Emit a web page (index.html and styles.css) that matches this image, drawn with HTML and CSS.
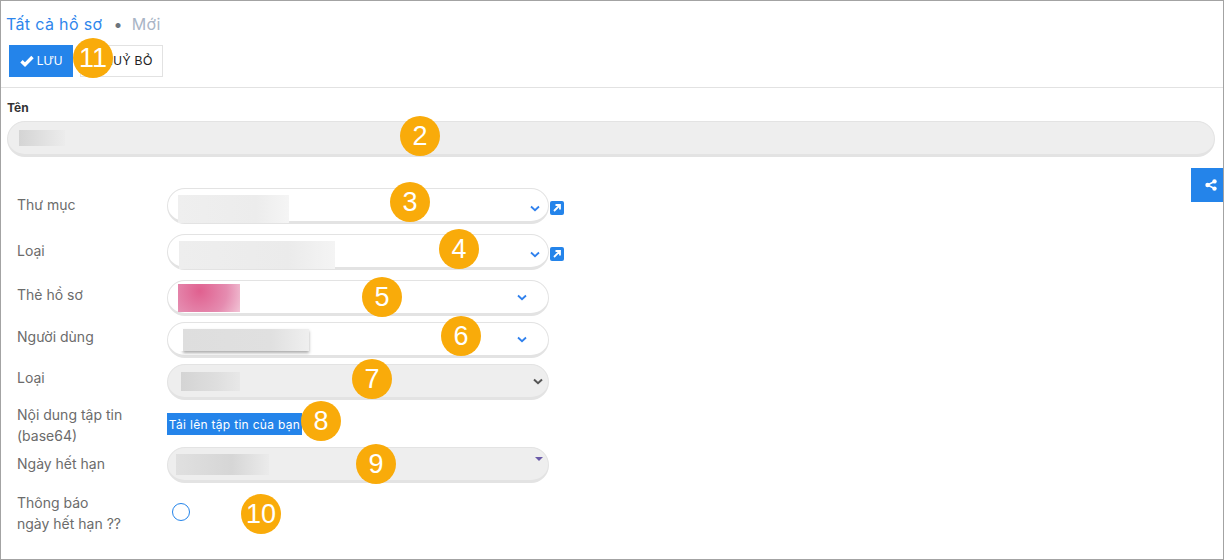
FILE: index.html
```html
<!DOCTYPE html>
<html lang="vi">
  <head>
    <meta charset="UTF-8" />
    <title>Tất cả hồ sơ</title>
    <link rel="stylesheet" href="styles.css">
  </head>
  <body>
    <div class="frame">
      <div class="page-head">
        <div class="crumbs">
          <a class="crumb-link">Tất cả hồ sơ</a>
          <span class="crumb-dot">•</span>
          <span class="crumb-now">Mới</span>
        </div>
        <div class="actions">
          <button class="btn-save">
            <svg class="check" viewBox="0 0 14 12" width="14" height="12"><path d="M1.5 6.2 5 9.6 12.5 2" fill="none" stroke="#fff" stroke-width="3.4"/></svg>
            LƯU
          </button>
          <button class="btn-cancel">HUỶ BỎ</button>
        </div>
      </div>

      <div class="form">
        <label class="name-label">Tên</label>
        <div class="name-input"><span class="blur blur-name"></span></div>

        <div class="row row-folder">
          <div class="row-label">Thư mục</div>
          <div class="field">
            <span class="blur blur-folder"></span>
            <svg class="chev chev-low" viewBox="0 0 10 7" width="10" height="7"><path d="M1 1.5 5 5.2 9 1.5" fill="none" stroke="#2f80ed" stroke-width="1.8"/></svg>
          </div>
          <span class="ext-link"><svg viewBox="0 0 14 14" width="14" height="14"><path d="M4 10 9.5 4.5M5.5 4h4.5v4.5" fill="none" stroke="#fff" stroke-width="1.8"/></svg></span>
        </div>

        <div class="row row-type">
          <div class="row-label">Loại</div>
          <div class="field">
            <span class="blur blur-type"></span>
            <svg class="chev chev-low" viewBox="0 0 10 7" width="10" height="7"><path d="M1 1.5 5 5.2 9 1.5" fill="none" stroke="#2f80ed" stroke-width="1.8"/></svg>
          </div>
          <span class="ext-link"><svg viewBox="0 0 14 14" width="14" height="14"><path d="M4 10 9.5 4.5M5.5 4h4.5v4.5" fill="none" stroke="#fff" stroke-width="1.8"/></svg></span>
        </div>

        <div class="row row-tag">
          <div class="row-label">Thẻ hồ sơ</div>
          <div class="field field-wide-chev">
            <span class="blur blur-tag"></span>
            <svg class="chev" viewBox="0 0 10 7" width="10" height="7"><path d="M1 1.5 5 5.2 9 1.5" fill="none" stroke="#2f80ed" stroke-width="1.8"/></svg>
          </div>
        </div>

        <div class="row row-user">
          <div class="row-label">Người dùng</div>
          <div class="field field-wide-chev">
            <span class="blur blur-user"></span>
            <svg class="chev" viewBox="0 0 10 7" width="10" height="7"><path d="M1 1.5 5 5.2 9 1.5" fill="none" stroke="#2f80ed" stroke-width="1.8"/></svg>
          </div>
        </div>

        <div class="row row-kind">
          <div class="row-label">Loại</div>
          <div class="field field-off">
            <span class="blur blur-kind"></span>
            <svg class="chev" viewBox="0 0 10 7" width="10" height="7"><path d="M1 1.5 5 5.2 9 1.5" fill="none" stroke="#555" stroke-width="2"/></svg>
          </div>
        </div>

        <div class="row row-file">
          <div class="row-label">Nội dung tập tin<br>(base64)</div>
          <button class="btn-upload">Tải lên tập tin của bạn</button>
        </div>

        <div class="row row-date">
          <div class="row-label">Ngày hết hạn</div>
          <div class="field field-off">
            <span class="blur blur-date"></span>
            <span class="caret"></span>
          </div>
        </div>

        <div class="row row-notify">
          <div class="row-label">Thông báo<br>ngày hết hạn ??</div>
          <span class="radio"></span>
        </div>
      </div>

      <div class="share-tab">
        <svg viewBox="0 0 12 12" width="12" height="12">
          <path d="M2.5 6 9.5 2.5M2.5 6l7 3.5" stroke="#fff" stroke-width="1.4" fill="none"/>
          <circle cx="2.6" cy="6" r="2.3" fill="#fff"/>
          <circle cx="9.5" cy="2.4" r="2.2" fill="#fff"/>
          <circle cx="9.5" cy="9.6" r="2.2" fill="#fff"/>
        </svg>
      </div>

      <!-- numbered callouts on top of the form -->
      <span class="badge b11">11</span>
      <span class="badge b2">2</span>
      <span class="badge b3">3</span>
      <span class="badge b4">4</span>
      <span class="badge b5">5</span>
      <span class="badge b6">6</span>
      <span class="badge b7">7</span>
      <span class="badge b8">8</span>
      <span class="badge b9">9</span>
      <span class="badge b10">10</span>
    </div>
  </body>
</html>
```

FILE: styles.css
```css
* {
  box-sizing: border-box;
}
body {
  margin: 0;
  background-color: white;
  font-family: Inter, "Open Sans", sans-serif;
}
.frame {
  position: relative;
  width: 1224px;
  height: 560px;
  border: 1px solid #a3a3a3;
  overflow: hidden;
}

.page-head {
  height: 87px;
  padding: 13px 0 0 5px;
  border-bottom: 1px solid #e2e2e2;
}
.crumbs {
  display: flex;
  align-items: center;
  height: 20px;
  font-size: 16px;
  letter-spacing: 0.35px;
}
.crumb-link {
  color: #2e86ec;
}
.crumb-dot {
  margin: 0 9px 0 11px;
  color: #6c757d;
  font-size: 16px;
}
.crumb-now {
  color: #a9b5c6;
}
.actions {
  display: flex;
  gap: 7px;
  margin: 11px 0 0 3px;
}
.btn-save,
.btn-cancel {
  height: 32px;
  font-family: "Liberation Sans", Arial, sans-serif;
  font-size: 12px;
  border-radius: 0;
  padding: 0;
}
.btn-save {
  display: flex;
  align-items: center;
  justify-content: center;
  gap: 3px;
  width: 64px;
  background-color: #2484ea;
  color: white;
  border: none;
}
.btn-cancel {
  width: 83px;
  background-color: white;
  color: #222;
  border: 1px solid #e2e2e2;
  padding-left: 14px;
  letter-spacing: 0.4px;
}

.form {
  padding: 0 0 0 6px;
}
.name-label {
  display: block;
  margin-top: 12px;
  height: 15px;
  line-height: 15px;
  font-size: 12px;
  font-weight: 700;
  color: #333;
}
.name-input {
  display: flex;
  align-items: center;
  width: 1208px;
  height: 36px;
  margin-top: 6px;
  padding-left: 11px;
  background-color: #eeeeee;
  border: 1px solid #e3e3e3;
  border-bottom-width: 3px;
  border-radius: 18px;
}

.row {
  display: flex;
  align-items: flex-start;
}
.row-label {
  width: 160px;
  padding-left: 10px;
  font-size: 14px;
  line-height: 21px;
  color: #6b6b6b;
}
.field {
  display: flex;
  align-items: center;
  justify-content: space-between;
  width: 382px;
  height: 36px;
  padding-right: 8px;
  background-color: white;
  border: 1px solid #e3e3e3;
  border-bottom-width: 3px;
  border-radius: 18px;
}
.field-wide-chev {
  padding-right: 21px;
}
.field-off {
  background-color: #eeeeee;
  padding-right: 5px;
}
.chev-low {
  margin-top: 7px;
}
.ext-link {
  display: flex;
  width: 14px;
  height: 14px;
  margin: 13px 0 0 1px;
  background-color: #2484ea;
  border-radius: 2px;
}
.row-folder {
  margin-top: 31px;
}
.row-type {
  margin-top: 10px;
}
.row-tag {
  margin-top: 10px;
}
.row-user,
.row-kind {
  margin-top: 6px;
}
.row-folder .row-label,
.row-type .row-label,
.row-date .row-label {
  padding-top: 6px;
}
.row-tag .row-label,
.row-user .row-label {
  padding-top: 4px;
}
.row-kind .row-label {
  padding-top: 3px;
}
.row-file {
  margin-top: 4px;
}
.btn-upload {
  height: 22px;
  margin-top: 9px;
  padding: 0;
  width: 135px;
  background-color: #2484ea;
  color: white;
  border: none;
  font-family: Inter, sans-serif;
  font-size: 12px;
  letter-spacing: 0.3px;
  white-space: nowrap;
}
.row-date {
  margin-top: 1px;
}
.row-notify {
  margin-top: 9px;
}
.radio {
  width: 18px;
  height: 18px;
  margin: 11px 0 0 5px;
  border: 1px solid #2484ea;
  border-radius: 50%;
}

.blur {
  display: block;
  flex: none;
}
.blur-name {
  width: 46px;
  height: 16px;
  background: linear-gradient(90deg, #d4d4d4, #ececec);
}
.blur-folder {
  width: 111px;
  height: 28px;
  margin: 8px 0 0 10px;
  background: linear-gradient(90deg, #efefef, #ececec 70%, #f5f5f5);
}
.blur-type {
  width: 156px;
  height: 28px;
  margin: 8px 0 0 11px;
  background: linear-gradient(90deg, #eeeeee, #ebebeb 70%, #f4f4f4);
}
.blur-tag {
  width: 62px;
  height: 28px;
  margin: 2px 0 0 10px;
  background: radial-gradient(circle at 35% 25%, #e0608f, #e58cb0 60%, #f2c4d6);
}
.blur-user {
  width: 126px;
  height: 22px;
  margin: 1px 0 0 15px;
  background: linear-gradient(90deg, #dedede, #e0e0e0 70%, #efefef);
  box-shadow: -5px 0 0 white, 0 2px 3px #aaa;
}
.blur-kind {
  width: 59px;
  height: 19px;
  margin-left: 13px;
  background: linear-gradient(90deg, #d4d4d4, #dedede 60%, #e8e8e8);
}
.blur-date {
  width: 93px;
  height: 21px;
  margin: 1px 0 0 8px;
  background: linear-gradient(90deg, #e0e0e0, #d6d6d6 60%, #ebebeb);
}
.caret {
  width: 0;
  height: 0;
  margin: 0 0 11px 0;
  border-left: 4px solid transparent;
  border-right: 4px solid transparent;
  border-top: 4px solid #6a5aa8;
}

.share-tab {
  position: absolute;
  top: 167px;
  right: 0;
  display: flex;
  align-items: center;
  justify-content: center;
  width: 32px;
  height: 34px;
  padding-left: 7px;
  background-color: #2484ea;
}

.badge {
  position: absolute;
  display: flex;
  align-items: center;
  justify-content: center;
  width: 40px;
  height: 40px;
  background-color: #f9ab0a;
  color: white;
  border-radius: 50%;
  font-family: "Liberation Sans", Arial, sans-serif;
  font-size: 27px;
}
.b11 { left: 72px; top: 37px; }
.b2 { left: 399px; top: 115px; }
.b3 { left: 389px; top: 181px; }
.b4 { left: 438px; top: 228px; }
.b5 { left: 361px; top: 276px; }
.b6 { left: 440px; top: 315px; }
.b7 { left: 351px; top: 358px; }
.b8 { left: 300px; top: 400px; }
.b9 { left: 355px; top: 443px; }
.b10 { left: 240px; top: 493px; }
```
